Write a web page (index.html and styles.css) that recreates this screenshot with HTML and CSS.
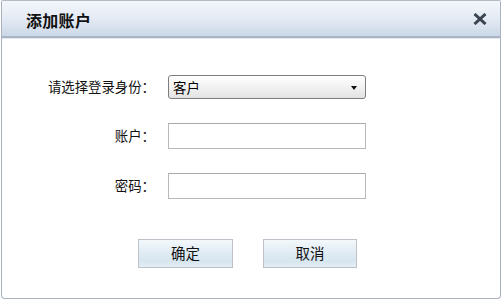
FILE: index.html
```html
<!DOCTYPE html>
<html lang="zh-CN">
<head>
<meta charset="utf-8">
<title>添加账户</title>
<link rel="stylesheet" href="styles.css">
</head>
<body>
<div class="dialog">
  <div class="titlebar">
    <span class="title">添加账户</span>
    <span class="close" aria-label="关闭">
      <svg width="14" height="12" viewBox="0 0 14 12"><path d="M1.5 1 L12.5 11 M12.5 1 L1.5 11" stroke="#3a4350" stroke-width="3" stroke-linecap="butt"/></svg>
    </span>
  </div>
  <div class="content">
    <div class="form">
      <label class="label">请选择登录身份：</label>
      <div class="select"><span>客户</span><span class="arrow"></span></div>
      <label class="label">账户：</label>
      <div class="input input-tall"></div>
      <label class="label">密码：</label>
      <div class="input input-tall"></div>
    </div>
    <div class="buttons">
      <button class="btn btn-ok">确定</button>
      <button class="btn btn-cancel">取消</button>
    </div>
  </div>
</div>
</body>
</html>
```
FILE: styles.css
```css
html, body {
  margin: 0;
  padding: 0;
  background: #ffffff;
}
body {
  font-family: "Noto Sans CJK SC", "Noto Sans", sans-serif;
  color: #111;
}
.dialog {
  margin-left: 1px;
  width: 500px;
  height: 299px;
  box-sizing: border-box;
  border: 1px solid #aab2bd;
  border-top-color: #b4bcc7;
  border-radius: 2px 2px 4px 4px;
  background: #fff;
  overflow: hidden;
}
.titlebar {
  height: 37px;
  box-sizing: border-box;
  border-bottom: 2px solid #a9b5c5;
  background: linear-gradient(to bottom, #f3f6fb 0%, #e6ecf5 45%, #ccd8e7 100%);
  display: flex;
  align-items: center;
  justify-content: space-between;
  padding: 0 13px 0 24px;
  box-shadow: 0 1px 0 #e4e9f0;
}
.title {
  font-size: 16px;
  font-weight: bold;
  color: #111;
  letter-spacing: 0.3px;
  margin-top: 2px;
}
.close {
  display: flex;
  margin-top: 1px;
}
.content {
  padding-top: 37px;
}
.form {
  display: grid;
  grid-template-columns: 153px 198px;
  column-gap: 13px;
  row-gap: 24px;
  align-items: center;
}
.label {
  text-align: right;
  font-size: 13.4px;
  color: #111;
  line-height: 1;
}
.select {
  height: 24px;
  box-sizing: border-box;
  border: 1px solid #7d7d7d;
  border-radius: 3px;
  background: linear-gradient(to bottom, #ffffff 0%, #f2f2f2 50%, #e2e2e2 100%);
  display: flex;
  align-items: center;
  justify-content: space-between;
  padding: 0 8px 0 4px;
  font-size: 13.4px;
  color: #000;
}
.arrow {
  width: 0;
  height: 0;
  border-left: 3.5px solid transparent;
  border-right: 3.5px solid transparent;
  border-top: 4px solid #111;
  margin-top: 2px;
}
.input {
  box-sizing: border-box;
  border: 1px solid #b9b9b9;
  border-top-color: #aaaaaa;
  background: #fff;
}
.input-tall {
  height: 26px;
}
.buttons {
  display: flex;
  gap: 30px;
  margin-top: 40px;
  padding-left: 136px;
}
.btn {
  width: 95px;
  height: 29px;
  box-sizing: border-box;
  border: 1px solid #bcc2c8;
  background: linear-gradient(to bottom, #f3f8fb 0%, #dfebf3 50%, #d6e6ef 80%, #e6eff5 100%);
  font-family: "Noto Sans CJK SC", "Noto Sans", sans-serif;
  font-size: 14.5px;
  color: #111;
  padding: 0;
  line-height: 1;
}
.btn-cancel {
  width: 94px;
}
```
